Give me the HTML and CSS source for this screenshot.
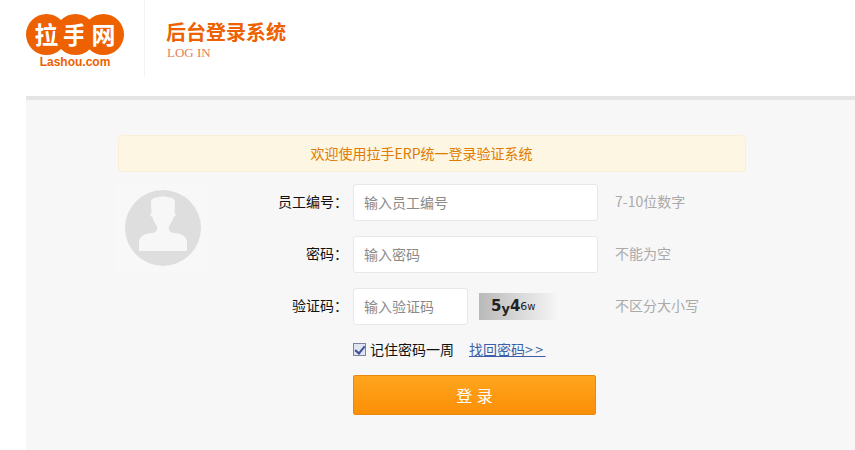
FILE: index.html
```html
<!DOCTYPE html>
<html lang="zh-CN">
<head>
<meta charset="utf-8">
<title>后台登录系统</title>
<link rel="stylesheet" href="styles.css">
</head>
<body>
<header class="header">
  <div class="logo">
    <div class="logo-mark"><span class="logo-char">拉</span><span class="logo-char">手</span><span class="logo-char">网</span></div>
    <div class="logo-site">Lashou.com</div>
  </div>
  <div class="heading">
    <div class="heading-title">后台登录系统</div>
    <div class="heading-sub">LOG IN</div>
  </div>
</header>
<main class="panel">
  <div class="notice">欢迎使用拉手ERP统一登录验证系统</div>
  <div class="body">
    <div class="avatar">
      <svg class="avatar-svg" width="76" height="76" viewBox="0 0 76 76">
        <circle cx="38" cy="38" r="38" fill="#dedede"/>
        <path d="M14 61V52C14 46 20 43.500 27 43 C32 42.500 33 39 31.500 35.500 C30 33 28.500 31 27.500 27.500 L25.500 25.500 C25 24.500 25.500 23.500 26.500 23 L26 12 C26 9 29 7.500 32 7.500 C34 6 42 6 44 7.500 C47 7.500 50 9 50 12 L49.500 23 C50.500 23.500 51 24.500 50.500 25.500 L48.500 27.500 C47.500 31 46 33 44.500 35.500 C43 39 44 42.500 49 43 C56 43.500 62 46 62 52V61Z" fill="#f7f7f7"/>
      </svg>
    </div>
    <form class="fields">
      <div class="row">
        <label class="label">员工编号<span class="colon">：</span></label>
        <input class="input" type="text" placeholder="输入员工编号">
        <span class="hint">7-10位数字</span>
      </div>
      <div class="row">
        <label class="label">密码<span class="colon">：</span></label>
        <input class="input" type="text" placeholder="输入密码">
        <span class="hint">不能为空</span>
      </div>
      <div class="row">
        <label class="label">验证码<span class="colon">：</span></label>
        <input class="input input-short" type="text" placeholder="输入验证码">
        <div class="captcha"><span class="c1">5</span><span class="c2">y</span><span class="c1">4</span><span class="c3">6</span><span class="c4">w</span></div>
        <span class="hint hint-captcha">不区分大小写</span>
      </div>
      <div class="options">
        <input class="check" type="checkbox" checked>
        <span class="remember">记住密码一周</span>
        <a class="forgot" href="#">找回密码<span class="arrows">&gt;&gt;</span></a>
      </div>
      <button class="submit" type="button">登 录</button>
    </form>
  </div>
</main>
</body>
</html>
```
FILE: styles.css
```css
* { box-sizing: border-box; }
html, body { margin: 0; height: 100%; overflow: hidden; }
body { background: #fff; font-family: "Noto Sans CJK SC", "Liberation Sans", sans-serif; font-size: 14px; color: #111; }

.header { height: 96px; display: flex; padding-left: 26px; }
.logo { width: 119px; height: 76px; padding-top: 14px; border-right: 1px solid #f3f3f3; }
.logo-mark { display: flex; width: 98px; height: 41px; }
.logo-char { flex: none; width: 41px; height: 41px; margin-right: -12.500px; border-radius: 50%; background: #ee6100; color: #fff; font-size: 24px; font-weight: 700; line-height: 40px; text-align: center; }
.logo-site { width: 98px; font-family: "Liberation Sans", sans-serif; font-size: 12px; font-weight: 700; line-height: 14px; text-align: center; color: #ee6100; }
.heading { margin-left: 21px; padding-top: 19px; }
.heading-title { font-size: 20px; font-weight: 700; line-height: 26px; color: #ee6100; }
.heading-sub { font-family: "Liberation Serif", serif; font-size: 13px; line-height: 14px; margin: 1px 0 0 1px; color: #e4602b; opacity: .8; }

.panel { height: 354px; margin-left: 26px; padding-top: 35px; background: #f7f7f7; border-top: 4px solid #e5e5e5; }
.notice { width: 628px; height: 37px; margin-left: 92px; padding-right: 21px; border: 1px solid #fbeed5; border-radius: 4px; background: #fdf6e3; color: #e07b00; font-size: 14px; line-height: 35px; text-align: center; }

.body { display: flex; margin-top: 12px; margin-left: 89px; }
.avatar { flex: none; width: 93px; height: 88px; padding: 6px 0 0 10px; background: #f8f8f8; }
.avatar-svg { display: block; }
.fields { width: 500px; }
.row { display: flex; align-items: center; height: 37px; margin-bottom: 15px; }
.label { width: 140px; margin-right: 5px; text-align: right; font-size: 14px; line-height: 20px; color: #111; margin-top: -4px; }
.colon { font-family: "Noto Sans CJK TC", sans-serif; }
.input { width: 245px; height: 37px; padding: 0 10px 2px; border: 1px solid #e8e8e8; border-radius: 3px; background: #fff; font-family: inherit; font-size: 14px; outline: none; }
.input::placeholder { color: #8a8a8a; opacity: 1; }
.input-short { width: 115px; }
.hint { margin-left: 17px; font-size: 14px; color: #aaa; white-space: nowrap; margin-top: -4px; }
.hint-captcha { margin-left: 56px; }
.captcha { display: flex; align-items: center; flex: none; width: 80px; height: 27px; margin-left: 11px; padding-left: 12px; background: linear-gradient(90deg, #b9b9b9, #f7f7f7); color: #222; font-family: "DejaVu Sans", sans-serif; font-weight: 700; line-height: 1; }
.c1 { font-size: 15px; }
.c2 { font-size: 13px; margin-top: 3px; }
.c3 { font-size: 11px; font-weight: 400; }
.c4 { font-size: 10px; font-weight: 400; }

.options { display: flex; align-items: center; height: 20px; margin-top: -1px; margin-left: 145px; font-size: 14px; }
.check { position: relative; flex: none; width: 13px; height: 13px; margin: 0 4px 0 0; appearance: none; border: 1px solid #7d83a0; background: #dfe5f3; }
.check::after { content: ""; position: absolute; left: 3px; top: 0; width: 4px; height: 8px; border: solid #3d4f9a; border-width: 0 2px 2px 0; transform: rotate(40deg); }
.remember { color: #111; }
.forgot { margin-left: 15px; color: #3b5fa8; text-decoration: underline; }
.arrows { letter-spacing: 2.500px; }
.submit { display: block; width: 243px; height: 40px; margin: 16px 0 0 145px; padding: 0; border: 1px solid #e88a0b; border-radius: 2px; background: linear-gradient(180deg, #ffa51e, #fb8f07); color: #fff; font-family: inherit; font-size: 16px; word-spacing: 1px; }
```
